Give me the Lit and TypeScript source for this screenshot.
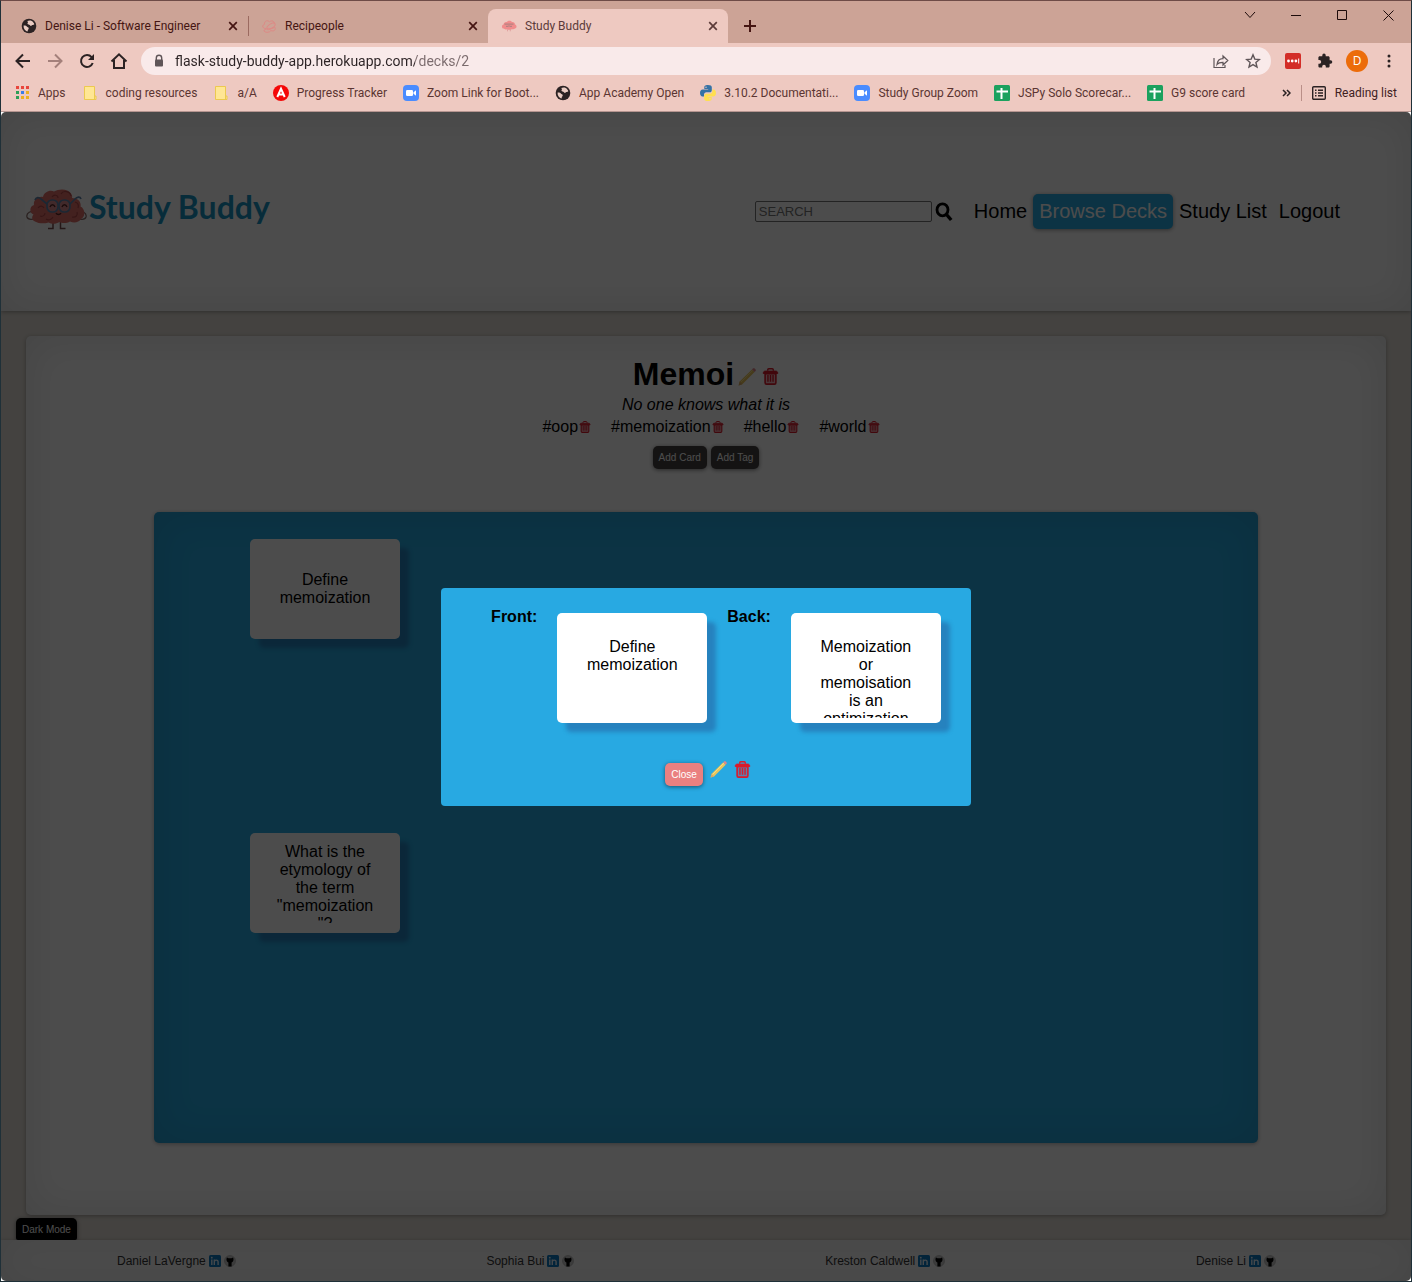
import { LitElement, html, svg, css, TemplateResult } from "lit";
import { customElement, property } from "lit/decorators.js";

/* ---------- shared icons ---------- */

const globe = html`<svg width="16" height="16" viewBox="0 0 16 16" aria-hidden="true">
  <circle cx="8" cy="8" r="7.3" fill="#2b2223" />
  <path d="M2.600 7.600c1.200-.4 2.600 0 3.200.9.5.7 1.800.6 1.900 1.700.1 1-.9 1.300-.9 2.200 0 .6-.2 1-.7 1.100C3.900 12.900 2.300 10.300 2.600 7.600z" fill="#e9cbc2" />
  <path d="M6.300 3.100c1-.7 3.200-.8 4.400-.1 1.200.6 2.300 2 2.600 3.300-.9.900-1.900.4-2.600 1.200-.7.700-1.700.4-2-.4-.3-.9-1.900-.4-2.200-1.400-.3-1 .9-1.300.4-1.800-.3-.3-.8-.4-.6-.8z" fill="#e9cbc2" />
</svg>`;

const knot = html`<svg width="16" height="16" viewBox="0 0 16 16" fill="none" stroke="#dd8a86" stroke-width="1" aria-hidden="true">
  <path d="M5 10.500C1.500 11 .5 7 3.500 6.300 3 2.800 7 1.500 8.500 4c2-2.500 5.800-.5 4.500 2.200" />
  <ellipse cx="10" cy="8.200" rx="4.800" ry="2.200" transform="rotate(-35 10 8.200)" />
  <path d="M4 13.800c-2-.8-.5-3 1-2.300 1.500-2.500 6 .5 8.500-2.500 2.300 2.500-1 5-3.500 3.500-1.500 2-4.500 2.300-6 1.300z" />
</svg>`;

const brainSmall = html`<svg width="16" height="16" viewBox="0 0 16 16" aria-hidden="true">
  <path d="M2.600 10.600C.2 10 .6 7 2.600 6.600c0-2 1.700-3 3.200-2.600C7 2.300 10 2.300 11 4c1.800-.2 3 .8 3 2.400 2 .5 2.100 3.500 0 4.200-1 1-2.200.6-3.200.6-1.500.9-3.700.7-4.900 0-1.300.5-2.500.2-3.300-.6z" fill="#f08c8c" />
  <path d="M3.500 6.100h9M5 8.300h2.200M8.800 8.300H11M7.200 8h1.600" stroke="#a8807f" stroke-width="1" fill="none" />
  <path d="M6.500 11.300v2M9.300 11.300v2" stroke="#d99" stroke-width=".8" />
</svg>`;

const zoomCam = html`<svg width="16" height="16" viewBox="0 0 16 16" aria-hidden="true">
  <rect width="16" height="16" rx="4" fill="#4a8cff" />
  <rect x="3" y="5" width="7" height="6" rx="1.300" fill="#fff" />
  <path d="M10.500 7.300 13 5.300v5.400l-2.500-2z" fill="#fff" />
</svg>`;

const folder = html`<svg width="16" height="16" viewBox="0 0 16 16" aria-hidden="true">
  <path d="M2.500 1.500h10v9.500h1.500v3.500H2.500z" fill="#ffe694" stroke="#ecc94f" stroke-width="1" />
  <path d="M12.500 11v3.500" stroke="#ecc94f" />
</svg>`;

const appsGrid = html`<svg width="16" height="16" viewBox="0 0 16 16" aria-hidden="true">
  ${["#e8453c", "#e8453c", "#e8453c", "#2e9e57", "#3b7de8", "#edaf1f", "#2e9e57", "#edaf1f", "#edaf1f"].map(
    (c, i) => svg`<rect x=${2 + (i % 3) * 5} y=${1 + Math.floor(i / 3) * 5} width="3" height="3" fill=${c} />`
  )}
</svg>`;

const academy = html`<svg width="16" height="16" viewBox="0 0 16 16" aria-hidden="true">
  <circle cx="8" cy="8" r="8" fill="#f40808" />
  <path d="M4.300 12 8 3.800 11.700 12M5.600 9.500h4.800" fill="none" stroke="#fff" stroke-width="2" />
</svg>`;

const python = html`<svg width="16" height="16" viewBox="0 0 16 16" aria-hidden="true">
  <path d="M7.900 0C4.800 0 4.300 1.200 4.300 2.300V4h3.900v.6H2.600C1.100 4.600 0 5.800 0 8s1.200 3.400 2.400 3.400H4V9.600c0-1.300 1-2.300 2.300-2.300h3.500c1.200 0 2-1 2-2.100V2.300C11.800.9 10.500 0 7.900 0z" fill="#3572a5" />
  <path d="M8.100 16c3.100 0 3.600-1.200 3.600-2.300V12H7.800v-.6h5.600c1.500 0 2.600-1.200 2.600-3.400s-1.200-3.400-2.400-3.400H12.300v1.800c0 1.300-1.100 2.300-2.400 2.300H6.200c-1.200 0-2 1-2 2.100v2.900c0 1.400 1.300 2.300 3.900 2.300z" fill="#ffdf4f" />
  <circle cx="6" cy="2.200" r=".7" fill="#eec9c1" /><circle cx="10" cy="13.800" r=".7" fill="#eec9c1" />
</svg>`;

const sheet = html`<svg width="16" height="16" viewBox="0 0 16 16" aria-hidden="true">
  <rect width="16" height="16" rx="1.500" fill="#1ba15e" />
  <path d="M7.500 3v11M2.500 6.500h11.500" stroke="#fff" stroke-width="2" />
</svg>`;

const pencil = (size: number) => html`<svg width=${size} height=${size} viewBox="0 0 18 18" aria-hidden="true">
  <path d="M.6 17.400 1.700 13.600 14 1.400l2.600 2.600L4.300 16.300z" fill="#e9c55c" />
  <path d="M2.500 14.500 14.700 2.300" stroke="#f6e08a" stroke-width="1" />
  <path d="M.6 17.400 1.700 13.600l2.600 2.700z" fill="#d8a867" />
  <path d="m14 1.400 .8-.8c.6-.6 1.300-.6 1.900 0l.7.700c.6.600.6 1.300 0 1.900l-.8.800z" fill="#e0868a" />
</svg>`;

const trash = (size: number) => html`<svg width=${size} height=${size} viewBox="0 0 18 18" fill="none" stroke="#da1a2b" aria-hidden="true">
  <path d="M3.300 6v9.500c0 1 .6 1.600 1.500 1.600h8.400c.9 0 1.500-.6 1.500-1.600V6z" fill="#da1a2b" fill-opacity=".3" stroke-width="1.700" />
  <path d="M6 3V2c0-.7.500-1.200 1.200-1.200h3.600c.7 0 1.200.5 1.200 1.200v1" stroke-width="1.500" />
  <path d="M1.300 5.800c0-1.800 1-2.500 2.200-2.500h11c1.200 0 2.200.7 2.200 2.500z" fill="#da1a2b" stroke-width="1" />
  <path d="M6.300 7.500v7M9 7.500v7M11.700 7.500v7" stroke-width="1.500" />
</svg>`;

const crossMark = html`<svg width="10" height="10" viewBox="0 0 10 10" fill="none" stroke="currentColor" stroke-width="1.700" aria-hidden="true">
  <path d="m1.200 1.200 7.600 7.600M8.800 1.200 1.200 8.800" />
</svg>`;

const reset = css`
  *, *::before, *::after { box-sizing: border-box; }
  button { font: inherit; color: inherit; background: none; border: 0; padding: 0; margin: 0; }
  a { color: inherit; text-decoration: none; }
  svg { display: block; flex: none; }
  h1, h2, p, ul { margin: 0; padding: 0; }
  ul { list-style: none; }
`;

/* ---------- browser window ---------- */

@customElement("tab-strip")
class TabStrip extends LitElement {
  static styles = [reset, css`
    :host { display: block; background: #cca396; font: 12px/16px Roboto, "Open Sans", sans-serif; color: #451512; }
    .strip { display: flex; align-items: flex-start; height: 42px; padding-left: 7px; }
    .tabs { display: flex; align-items: flex-end; height: 42px; }
    .tab { display: flex; align-items: center; width: 240px; height: 34px; padding: 0 10px 0 13px; gap: 8px; border-radius: 8px 8px 0 0; }
    .tab.divided::before { content: ""; width: 1px; height: 20px; margin-left: -13px; margin-right: 4px; background: #9b6a60; }
    .tab.active { background: #eec9c1; color: #5c3b39; }
    .title { flex: 1; text-align: left; white-space: nowrap; overflow: hidden; }
    .close { width: 10px; height: 10px; }
    .add { width: 44px; height: 34px; margin-top: 8px; display: grid; place-items: center; }
    .controls { margin-left: auto; display: flex; color: #1d0b0a; }
    .controls button { width: 46px; height: 28px; display: grid; place-items: center; }
  `];
  render() {
    return html`<div class="strip">
      <div class="tabs">
        <div class="tab">${globe}<button class="title">Denise Li - Software Engineer</button><button class="close" aria-label="Close tab">${crossMark}</button></div>
        <div class="tab divided">${knot}<button class="title">Recipeople</button><button class="close" aria-label="Close tab">${crossMark}</button></div>
        <div class="tab active">${brainSmall}<button class="title">Study Buddy</button><button class="close" aria-label="Close tab">${crossMark}</button></div>
      </div>
      <button class="add" aria-label="New tab"><svg width="12" height="12" viewBox="0 0 12 12" stroke="currentColor" stroke-width="2"><path d="M6 0v12M0 6h12" /></svg></button>
      <div class="controls">
        <button aria-label="Search tabs"><svg width="12" height="8" viewBox="0 0 12 8" fill="none" stroke="currentColor"><path d="m1 1 5 5.500L11 1" /></svg></button>
        <button aria-label="Minimize"><svg width="10" height="10" viewBox="0 0 10 10" stroke="currentColor"><path d="M0 5.500h10" /></svg></button>
        <button aria-label="Maximize"><svg width="10" height="10" viewBox="0 0 10 10" fill="none" stroke="currentColor"><path d="M.5.5h9v9h-9z" /></svg></button>
        <button aria-label="Close"><svg width="11" height="11" viewBox="0 0 11 11" stroke="currentColor"><path d="m.5.5 10 10M10.500.5l-10 10" /></svg></button>
      </div>
    </div>`;
  }
}

@customElement("address-row")
class AddressRow extends LitElement {
  static styles = [reset, css`
    :host { display: block; background: #eec9c1; color: #2b2223; }
    .row { display: flex; align-items: center; height: 36px; padding: 0 6px; }
    .tool { width: 32px; height: 32px; flex: none; display: grid; place-items: center; }
    .faded { color: #a4807b; }
    .omnibox { flex: 1; min-width: 0; display: flex; align-items: center; height: 28px; margin: 0 6px; padding: 0 2px 0 12px; gap: 10px; border-radius: 14px; background: #f9eaea; color: #5f5558; }
    .url { flex: 1; min-width: 0; border: 0; padding: 0; outline: 0; font: 14px/20px Roboto, "Open Sans", sans-serif; color: transparent; background: linear-gradient(90deg, #2c2325 240px, #7a6a6c 240px); -webkit-background-clip: text; background-clip: text; }
    .actions { display: flex; }
    .avatar { width: 22px; height: 22px; border-radius: 50%; background: #ec6c0a; color: #fff; font: 12px/22px "Open Sans", sans-serif; text-align: center; }
  `];
  render() {
    return html`<div class="row">
      <button class="tool" aria-label="Back"><svg width="16" height="16" viewBox="0 0 16 16" fill="none" stroke="currentColor" stroke-width="2"><path d="M15 8H2M8 1.500 1.500 8 8 14.500" /></svg></button>
      <button class="tool faded" aria-label="Forward"><svg width="16" height="16" viewBox="0 0 16 16" fill="none" stroke="currentColor" stroke-width="2"><path d="M1 8h13M8 1.500 14.500 8 8 14.500" /></svg></button>
      <button class="tool" aria-label="Reload"><svg width="16" height="16" viewBox="0 0 16 16" fill="none" stroke="currentColor" stroke-width="2"><path d="M13.700 10A6 6 0 1 1 12.600 4.100L14 5.500" /><path d="M15 1v6H9z" fill="currentColor" stroke="none" /></svg></button>
      <button class="tool" aria-label="Home"><svg width="18" height="18" viewBox="0 0 18 18" fill="none" stroke="currentColor" stroke-width="2"><path d="M1.500 9.500 9 2.300l7.500 7.200M4 8v8h10V8" /></svg></button>
      <div class="omnibox">
        <svg width="12" height="14" viewBox="0 0 12 14"><path d="M3.300 6V4a2.700 2.700 0 0 1 5.400 0v2" fill="none" stroke="currentColor" stroke-width="1.400" /><rect x="2" y="5.500" width="8" height="7" rx="1" fill="currentColor" /></svg>
        <input class="url" aria-label="Address" value="flask-study-buddy-app.herokuapp.com/decks/2" />
        <div class="actions">
          <button class="tool" aria-label="Share"><svg width="16" height="15" viewBox="0 0 16 15" fill="none" stroke="currentColor" stroke-width="1.200"><path d="M1 4v9.500h11V11M4 10.500c.5-4 3-5.800 6-5.800V2l4.800 4.500L10 11V8.300c-2.500 0-4.500.2-6 2.200z" /></svg></button>
          <button class="tool" aria-label="Bookmark this tab"><svg width="16" height="16" viewBox="0 0 16 16" fill="none" stroke="currentColor" stroke-width="1.400"><path d="m8 1.800 1.800 4.300 4.600.4-3.500 3 1.100 4.500L8 11.600 4 14l1.100-4.500-3.500-3 4.600-.4z" /></svg></button>
        </div>
      </div>
      <button class="tool" aria-label="Password manager"><svg width="16" height="16" viewBox="0 0 16 16"><rect width="16" height="16" rx="2" fill="#d32d27" /><circle cx="3.500" cy="8" r="1.400" fill="#fff" /><circle cx="7.200" cy="8" r="1.400" fill="#fff" /><circle cx="10.900" cy="8" r="1.400" fill="#fff" /><path d="M13.700 5.500v5" stroke="#fff" /></svg></button>
      <button class="tool" aria-label="Extensions"><svg width="16" height="16" viewBox="0 0 16 16" fill="currentColor"><path d="M13.600 7.300h-1V4.600c0-.7-.6-1.300-1.300-1.300H8.700v-1a1.700 1.700 0 0 0-3.400 0v1H2.700c-.7 0-1.300.6-1.300 1.300v2.500h1a1.800 1.800 0 0 1 0 3.600h-1v2.600c0 .7.600 1.300 1.300 1.300h2.500v-1a1.800 1.800 0 0 1 3.600 0v1h2.500c.7 0 1.300-.6 1.300-1.300v-2.600h1a1.700 1.700 0 0 0 0-3.400z" /></svg></button>
      <button class="tool" aria-label="Profile"><span class="avatar">D</span></button>
      <button class="tool" aria-label="Menu"><svg width="4" height="14" viewBox="0 0 4 14" fill="currentColor"><circle cx="2" cy="2" r="1.500" /><circle cx="2" cy="7" r="1.500" /><circle cx="2" cy="12" r="1.500" /></svg></button>
    </div>`;
  }
}

@customElement("bookmark-row")
class BookmarkRow extends LitElement {
  static styles = [reset, css`
    :host { display: block; background: #eec9c1; color: #5b3532; font: 12px/16px Roboto, "Open Sans", sans-serif; border-bottom: 1px solid #b59590; }
    .row { display: flex; align-items: center; height: 32px; padding: 0 14px 4px 13px; }
    .links { display: flex; gap: 16px; }
    .mark { display: flex; align-items: center; gap: 8px; white-space: nowrap; }
    .end { margin-left: auto; display: flex; align-items: center; gap: 10px; color: #2b2223; }
    .rule { width: 1px; height: 16px; background: #b98f88; }
    .reading { display: flex; align-items: center; gap: 9px; white-space: nowrap; color: #40211f; }
  `];
  private marks: [TemplateResult, string][] = [
    [appsGrid, "Apps"],
    [folder, "coding resources"],
    [folder, "a/A"],
    [academy, "Progress Tracker"],
    [zoomCam, "Zoom Link for Boot..."],
    [globe, "App Academy Open"],
    [python, "3.10.2 Documentati..."],
    [zoomCam, "Study Group Zoom"],
    [sheet, "JSPy Solo Scorecar..."],
    [sheet, "G9 score card"],
  ];
  render() {
    return html`<nav class="row" aria-label="Bookmarks">
      <div class="links">${this.marks.map(([icon, name]) => html`<a class="mark" href="#">${icon}<span>${name}</span></a>`)}</div>
      <div class="end">
        <button aria-label="More bookmarks"><svg width="9" height="8" viewBox="0 0 9 8" fill="none" stroke="currentColor" stroke-width="1.500"><path d="m1 1 3 3-3 3M5 1l3 3-3 3" /></svg></button>
        <span class="rule"></span>
        <button class="reading"><svg width="14" height="14" viewBox="0 0 14 14" fill="none" stroke="#2b2223" stroke-width="1.400"><rect x=".7" y=".7" width="12.600" height="12.600" rx="1" /><path d="M3 4.200h1.500M6 4.200h5M3 7h1.500M6 7h5M3 9.800h1.500M6 9.800h5" /></svg>Reading list</button>
      </div>
    </nav>`;
  }
}

/* ---------- Study Buddy site ---------- */

@customElement("site-header")
class SiteHeader extends LitElement {
  static styles = [reset, css`
    :host { display: block; position: relative; background: #fff; box-shadow: 0 1px 4px rgba(0, 0, 0, 0.3), inset 0 0 40px rgba(0, 0, 0, 0.1); }
    .bar { display: flex; align-items: center; min-height: 199px; padding: 0 65px 0 25px; }
    .brand { display: flex; align-items: flex-start; gap: 2px; padding-bottom: 4px; font: 700 32px/36px Lato, sans-serif; color: #1a95c4; }
    .menu { margin-left: auto; display: flex; align-items: center; font: 20px/23px "Liberation Sans", Arial, sans-serif; color: #000; }
    .search { display: flex; align-items: center; gap: 3px; margin-right: 15px; }
    .field { width: 177px; height: 21px; padding: 1px 3px; border: 1px solid #767676; border-radius: 2px; background: #fff; font: 13px/15px "Liberation Sans", Arial, sans-serif; }
    .field::placeholder { color: #757575; opacity: 1; }
    .link { padding: 6px; border-radius: 5px; }
    .current { background: #28abe3; color: #fff; box-shadow: 0 1px 4px rgba(0, 0, 0, 0.4); }
  `];
  render() {
    return html`<header class="bar">
      <a class="brand" href="#">
        <svg width="61" height="42" viewBox="0 0 61 42" aria-hidden="true">
          <path d="M10 23c-5-2-10 1-9 5 1 3 6 3 9 1M51 23c5-2 10 1 9 5-1 3-6 3-9 1" fill="none" stroke="#8d6f6c" stroke-width="1.300" />
          <path d="M27 33v6.500h-5M34.500 33v6.500h5" fill="none" stroke="#7a4f4d" stroke-width="1.500" />
          <path d="M9 32.500c-3.500-1-3.500-5-1.500-7C3 24 3.500 17 8 16c-1-5 4-9 9-8 1-5 7-7.500 11-5.500C33-.5 42-.5 45 4.500c1 1.500 1.500 3 1 4.500 6 0 9.500 4 8.500 8.500 4.500 2 5.500 10 .5 12.500-2 3.500-7 4.500-11 2.500-3 2-8 2-10.500.5-4 2.500-8 2-11 .5-4.500 1.500-10 1-13.500-1z" fill="#e0716a" />
          <path d="M14 27c3 1 5-1 5-3M46 28c4 1 6-2 5-5M26 8c2-3 6-2 6 1M35 5c2-4 9-3 10 2M20 30c3 2 6 0 7-2M12 19c2-3 5-2 6 0M49 13c3 1 4 3 3 6" fill="none" stroke="#b44a4a" stroke-width="1.200" />
          <path d="M9 11c1-3 4-3 6-1l6 5M55 10c-1-3-4-2-6 0l-5 5M31 16h3" fill="none" stroke="#5e84ab" stroke-width="1.700" />
          <rect x="21" y="11" width="11" height="12" rx="5" fill="#d98b8e" stroke="#5e84ab" stroke-width="1.700" />
          <rect x="33" y="11" width="11" height="12" rx="5" fill="#d98b8e" stroke="#5e84ab" stroke-width="1.700" />
          <path d="M24 18c1-3 4-3 5 0M36 18c1-3 4-3 5 0M30 24c1 2 4 2 5 0" fill="none" stroke="#5a2626" stroke-width="1.400" />
        </svg>
        <span>Study Buddy</span>
      </a>
      <div class="menu">
        <form class="search">
          <input class="field" type="text" placeholder="SEARCH" aria-label="Search" />
          <button type="button" aria-label="Search"><svg width="18" height="20" viewBox="0 0 18 20" fill="none" stroke="#000"><ellipse cx="7.500" cy="7.800" rx="5.500" ry="6" stroke-width="2.800" /><path d="m11.500 12.500 4.700 5.500" stroke-width="3.400" /></svg></button>
        </form>
        <a class="link" href="#">Home</a>
        <a class="link current" href="#">Browse Decks</a>
        <a class="link" href="#">Study List</a>
        <a class="link" href="#">Logout</a>
      </div>
    </header>`;
  }
}

@customElement("flash-card")
class FlashCard extends LitElement {
  @property() text = "";
  @property({ reflect: true }) variant = "deck";
  static styles = [reset, css`
    :host { display: block; width: 150px; font: 16px/18px "Liberation Sans", Arial, sans-serif; color: #000; text-align: center; }
    .face { display: flex; flex-direction: column; height: 100px; padding: 10px 25px; border-radius: 5px; background: #fff; box-shadow: 9px 9px 4px rgba(36, 73, 137, 0.4); }
    .body { flex: 1; min-height: 0; display: flex; flex-direction: column; justify-content: safe center; overflow: hidden; overflow-wrap: anywhere; }
    :host([variant="modal"]) .face { height: 110px; padding: 25px 25px 5px; }
    :host([variant="modal"]) .body { justify-content: flex-start; }
  `];
  render() {
    return html`<div class="face"><div class="body"><p>${this.text}</p></div></div>`;
  }
}

const pill = css`
  .pill { height: 23px; padding: 0 6px; border-radius: 5px; font: 10px/23px "Liberation Sans", Arial, sans-serif; color: #fff; box-shadow: 0 1px 4px rgba(0, 0, 0, 0.5); }
`;

@customElement("deck-view")
class DeckView extends LitElement {
  static styles = [reset, pill, css`
    :host { flex: 1; display: flex; flex-direction: column; font: 16px/18px "Liberation Sans", Arial, sans-serif; color: #000; }
    .deck { flex: 1; display: flex; flex-direction: column; align-items: center; margin: 25px 25px 0; padding: 19px 128px 72px; background: #fff; border-radius: 5px; box-shadow: 0 1px 4px rgba(0, 0, 0, 0.3), inset 0 0 40px rgba(0, 0, 0, 0.1); }
    .heading { display: flex; align-items: center; gap: 4px; }
    .heading button { padding-top: 5px; }
    .heading button:last-child { padding-left: 2px; }
    .name { font: 700 32px/38px "Liberation Sans", Arial, sans-serif; }
    .about { padding: 3px 0 4px; font-style: italic; }
    .tags { display: flex; gap: 20px; padding-left: 10px; }
    .tag { display: flex; align-items: center; gap: 1px; }
    .actions { display: flex; gap: 4px; padding: 10px 0 43px; }
    .dark { background: #454140; }
    .cards { flex: 1; align-self: stretch; display: grid; align-content: start; justify-items: start; gap: 194px; padding: 27px 96px; background: #28abe3; border-radius: 5px; box-shadow: 0 1px 4px rgba(0, 0, 0, 0.3), inset 0 0 40px rgba(0, 0, 0, 0.1); }
    .mode { padding: 3px 15px 0; height: 25px; }
    .black { background: #000; height: 22px; border-radius: 5px 5px 2px 2px; }
  `];
  render() {
    return html`
      <section class="deck">
        <div class="heading"><h1 class="name">Memoi</h1><button aria-label="Edit deck">${pencil(18)}</button><button aria-label="Delete deck">${trash(17)}</button></div>
        <p class="about">No one knows what it is</p>
        <ul class="tags">
          ${["#oop", "#memoization", "#hello", "#world"].map((t) => html`<li class="tag">${t}<button aria-label="Remove tag">${trash(12)}</button></li>`)}
        </ul>
        <div class="actions"><button class="pill dark">Add Card</button><button class="pill dark">Add Tag</button></div>
        <div class="cards">
          <flash-card text="Define memoization"></flash-card>
          <flash-card text='What is the etymology of the term "memoization"?'></flash-card>
        </div>
      </section>
      <div class="mode"><button class="pill black">Dark Mode</button></div>`;
  }
}

@customElement("site-footer")
class SiteFooter extends LitElement {
  static styles = [reset, css`
    :host { display: block; background: #fff; box-shadow: 0 1px 4px rgba(0, 0, 0, 0.3), inset 0 0 40px rgba(0, 0, 0, 0.1); font: 12px/14px "Liberation Sans", Arial, sans-serif; color: #333; }
    .people { display: flex; justify-content: space-between; align-items: center; height: 41px; padding: 0 135px 0 116px; }
    .person { display: flex; align-items: center; gap: 3px; }
  `];
  render() {
    return html`<ul class="people">
      ${["Daniel LaVergne", "Sophia Bui", "Kreston Caldwell", "Denise Li"].map((n) => html`<li class="person">
        <span>${n}</span>
        <a href="#" aria-label="LinkedIn"><svg width="12" height="12" viewBox="0 0 12 12"><rect width="12" height="12" rx="1.500" fill="#0a7bc4" /><path d="M2.800 4.600V10M5.300 10V4.600M5.300 7c0-2.300 3.800-2.600 3.800 0v3" fill="none" stroke="#e6f2fa" stroke-width="1.400" /><circle cx="2.800" cy="2.700" r=".9" fill="#e6f2fa" /></svg></a>
        <a href="#" aria-label="GitHub"><svg width="12" height="12" viewBox="0 0 12 12"><circle cx="6" cy="6" r="5.500" fill="#c9c9c9" stroke="#aaa" stroke-width=".6" /><path d="m3 2.500 1.500.7h3L9 2.500c.6 1 .7 2.300.2 3.400-.4.900-1 1.400-1.600 1.600V11.500H4.400V7.500c-.6-.2-1.200-.7-1.600-1.600C2.300 4.800 2.400 3.500 3 2.500z" fill="#000" /></svg></a>
      </li>`)}
    </ul>`;
  }
}

@customElement("card-dialog")
class CardDialog extends LitElement {
  static styles = [reset, pill, css`
    :host { display: block; font: 16px/18px "Liberation Sans", Arial, sans-serif; color: #000; }
    .dialog { padding: 20px 30px 20px 50px; border-radius: 4px; background: #28a9e2; }
    .sides { display: flex; align-items: flex-start; gap: 20px; }
    .sides flash-card { padding-top: 5px; }
    .label { font-size: 16px; line-height: 18px; font-weight: 700; }
    .actions { display: flex; align-items: flex-start; justify-content: center; gap: 7px; padding: 38px 16px 0 0; }
    .close { background: #ea8080; margin-top: 2px; }
  `];
  render() {
    return html`<div class="dialog" role="dialog" aria-label="Card">
      <div class="sides">
        <h2 class="label">Front:</h2>
        <flash-card variant="modal" text="Define memoization"></flash-card>
        <h2 class="label">Back:</h2>
        <flash-card variant="modal" text="Memoization or memoisation is an optimization"></flash-card>
      </div>
      <div class="actions">
        <button class="pill close">Close</button>
        <button aria-label="Edit card">${pencil(17)}</button>
        <button aria-label="Delete card">${trash(17)}</button>
      </div>
    </div>`;
  }
}

@customElement("app-root")
class AppRoot extends LitElement {
  static styles = [reset, css`
    :host { display: block; }
    .window { display: flex; flex-direction: column; min-height: 100vh; border: 1px solid #1f3038; border-top-color: #6e4b47; background: #fff; }
    .page { position: relative; flex: 1; display: flex; flex-direction: column; overflow: hidden; border-radius: 5px; background: #e3ddd6; }
    .shade { position: absolute; inset: 0; display: flex; align-items: center; justify-content: center; background: rgba(0, 0, 0, 0.7); }
  `];
  render() {
    return html`<div class="window">
      <tab-strip></tab-strip>
      <address-row></address-row>
      <bookmark-row></bookmark-row>
      <div class="page">
        <site-header></site-header>
        <deck-view></deck-view>
        <site-footer></site-footer>
        <div class="shade"><card-dialog></card-dialog></div>
      </div>
    </div>`;
  }
}
